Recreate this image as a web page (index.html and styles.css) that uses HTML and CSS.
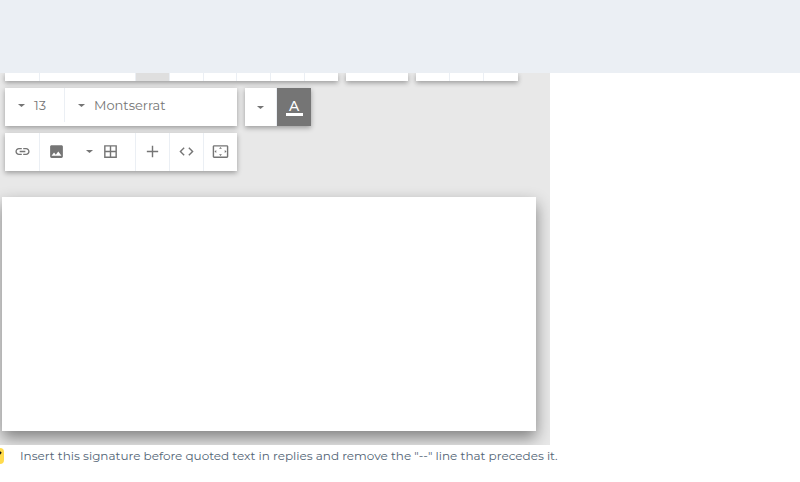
FILE: index.html
```html
<!DOCTYPE html>
<html lang="en">
<head>
<meta charset="utf-8">
<title>Signature</title>
<link rel="stylesheet" href="styles.css">
</head>
<body>
<svg class="sprite" aria-hidden="true">
  <symbol id="caret" viewBox="0 0 24 24"><path d="M7 10l5 4 5-4z"/></symbol>
</svg>
<header class="header"></header>
<main>
  <section class="editor">
    <div class="toolbar">
      <div class="row row-clipped">
        <div class="group">
          <button class="cell first" type="button" aria-label="Bold"></button>
          <button class="cell wide" type="button" aria-label="Style"></button>
          <button class="cell active" type="button" aria-label="Align left"></button>
          <button class="cell" type="button" aria-label="Align center"></button>
          <button class="cell slim" type="button" aria-label="Align right"></button>
          <button class="cell" type="button" aria-label="Justify"></button>
          <button class="cell" type="button" aria-label="Indent"></button>
          <button class="cell slim" type="button" aria-label="Outdent"></button>
        </div>
        <div class="group">
          <button class="cell lists" type="button" aria-label="List"></button>
        </div>
        <div class="group">
          <button class="cell" type="button" aria-label="Undo"></button>
          <button class="cell" type="button" aria-label="Redo"></button>
          <button class="cell" type="button" aria-label="Clear"></button>
        </div>
      </div>
      <div class="row">
        <div class="group fonts">
          <button class="cell size" type="button"><svg class="icon"><use href="#caret"/></svg>13</button>
          <button class="cell family" type="button"><svg class="icon"><use href="#caret"/></svg>Montserrat</button>
        </div>
        <div class="group">
          <button class="cell palette" type="button" aria-label="Choose color"><svg class="icon"><use href="#caret"/></svg></button>
          <button class="cell color" type="button" aria-label="Text color"><span class="letter">A</span></button>
        </div>
      </div>
      <div class="row">
        <div class="group icons">
          <button class="cell first" type="button" aria-label="Link"><svg class="icon" viewBox="0 0 24 24"><path d="M3.900 12c0-1.710 1.390-3.100 3.100-3.100h4V7H7c-2.760 0-5 2.240-5 5s2.240 5 5 5h4v-1.900H7c-1.710 0-3.100-1.390-3.100-3.100zM8 13h8v-2H8v2zm9-6h-4v1.900h4c1.710 0 3.100 1.390 3.100 3.100s-1.390 3.100-3.100 3.100h-4V17h4c2.760 0 5-2.240 5-5s-2.240-5-5-5z"/></svg></button>
          <button class="cell slim plain" type="button" aria-label="Image"><svg class="icon" viewBox="0 0 24 24"><path d="M21 19V5c0-1.100-.9-2-2-2H5c-1.100 0-2 .9-2 2v14c0 1.100.9 2 2 2h14c1.100 0 2-.9 2-2zM8.500 13.500l2.500 3.010L14.500 12l4.500 6H5l3.500-4.500z"/></svg></button>
          <button class="cell table" type="button" aria-label="Table"><svg class="icon"><use href="#caret"/></svg><svg class="icon" viewBox="0 0 24 24"><path fill-rule="evenodd" d="M3 3h18v18H3zM5 5v6h6V5zM13 5v6h6V5zM5 13v6h6v-6zM13 13v6h6v-6z"/></svg></button>
          <button class="cell" type="button" aria-label="Insert"><svg class="icon" viewBox="0 0 24 24"><path d="M20 13h-7v7h-2v-7H4v-2h7V4h2v7h7z"/></svg></button>
          <button class="cell" type="button" aria-label="Code"><svg class="icon" viewBox="0 0 24 24"><path d="M9.400 16.600L4.800 12l4.600-4.600L8 6l-6 6 6 6 1.400-1.400zm5.200 0l4.600-4.600-4.600-4.600L16 6l6 6-6 6-1.400-1.400z"/></svg></button>
          <button class="cell slim" type="button" aria-label="Full screen"><svg class="icon" viewBox="0 0 24 24"><path d="M12 5.500L10 8h4l-2-2.500zM18 10v4l2.500-2L18 10zM6 10l-2.500 2L6 14v-4zm8 6h-4l2 2.500 2-2.500zM21 3H3c-1.100 0-2 .9-2 2v14c0 1.100.9 2 2 2h18c1.100 0 2-.9 2-2V5c0-1.100-.9-2-2-2zm0 16H3V5h18v14z"/></svg></button>
        </div>
      </div>
    </div>
    <div class="page" contenteditable="true" role="textbox" aria-label="Signature"></div>
  </section>
  <label class="option">
    <span class="check"><input type="checkbox" checked><svg class="tick" viewBox="0 0 16 16"><path d="M3 8l3 4 7-8"/></svg></span>
    <span>Insert this signature before quoted text in replies and remove the "--" line that precedes it.</span>
  </label>
</main>
</body>
</html>
```
FILE: styles.css
```css
* {
  box-sizing: border-box;
}

body {
  margin: 0;
  overflow: hidden;
  background: #fff;
  color: #526475;
  font: 12px/21px Montserrat, "Open Sans", "Noto Sans", sans-serif;
}

.sprite {
  display: none;
}

.header {
  position: relative;
  z-index: 1;
  height: 73px;
  background: #ebeff4;
}

.editor {
  width: 550px;
  max-width: 100%;
  padding: 0 14px 14px 2px;
  overflow: hidden;
  background: #e8e8e8;
}

.toolbar {
  display: flex;
  flex-direction: column;
  gap: 7px;
  padding: 0 3px 26px;
}

.row {
  display: flex;
  gap: 8px;
}

.group {
  display: flex;
  height: 38px;
  background: #fff;
  box-shadow: 0 2px 5px rgba(0, 0, 0, 0.33);
}

.row-clipped .group {
  height: 8px;
}

.cell {
  display: flex;
  align-items: center;
  justify-content: center;
  gap: 4px;
  width: 34px;
  padding: 0;
  border: 0;
  border-right: 1px solid #ebeff4;
  background: none;
  color: #757575;
  font: inherit;
}

.cell:last-child,
.plain {
  border-right: 0;
}

.first {
  width: 35px;
}

.slim {
  width: 33px;
}

.palette {
  width: 32px;
}

.wide {
  width: 96px;
}

.lists {
  width: 62px;
}

.active {
  background: #dfdfdf;
}

.fonts .cell {
  justify-content: flex-start;
  height: 34px;
  padding-left: 8px;
  font-size: 13px;
}

.fonts .size {
  width: 60px;
}

.fonts .family {
  width: 172px;
}

.icons .cell {
  padding-bottom: 2px;
}

.icons .table {
  width: 63px;
  padding-right: 8px;
}

.icon {
  width: 17px;
  height: 17px;
  fill: currentColor;
}

.color {
  background: #757575;
  color: #fff;
}

.letter {
  width: 17px;
  border-bottom: 3px solid #fff;
  font-size: 14px;
  font-weight: 500;
  line-height: 14px;
}

.page {
  height: 234px;
  background: #fff;
  box-shadow: 0 7px 15px rgba(0, 0, 0, 0.45);
}

.option {
  display: flex;
  align-items: center;
  gap: 16px;
  margin-left: -12px;
  white-space: nowrap;
}

.check {
  display: grid;
}

.check input,
.tick {
  grid-area: 1 / 1;
  width: 16px;
  height: 16px;
  margin: 0;
}

.check input {
  appearance: none;
  border-radius: 4px;
  background: #ffdb4d;
}

.tick {
  fill: none;
  stroke: #111;
  stroke-width: 2;
  pointer-events: none;
}
```
